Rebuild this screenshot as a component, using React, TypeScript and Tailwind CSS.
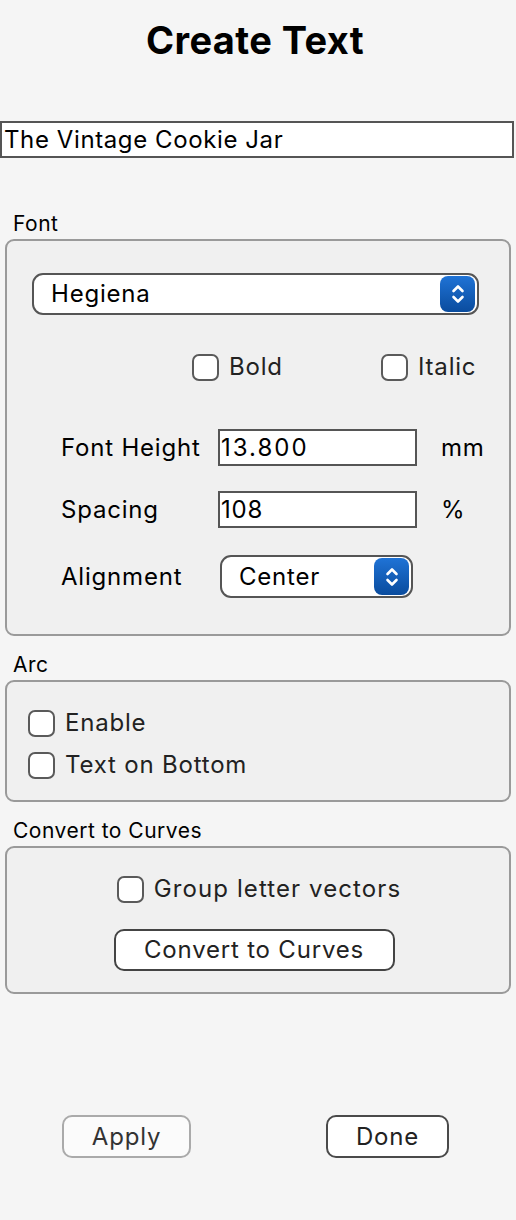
import React from "react";

const Check = ({ label }: { label: string }) => (
  <div className="flex items-center">
    <div className="w-[27px] h-[27px] rounded-[7px] border-2 border-[#5a5a5a] bg-white shrink-0" />
    <span className="ml-[10px] text-[24px] leading-[28px] text-[#222]">{label}</span>
  </div>
);

const Stepper = ({ w = 35, h = 36 }: { w?: number; h?: number }) => (
  <div
    className="rounded-[8px] bg-gradient-to-b from-[#1f73d6] to-[#0a4c9e] flex items-center justify-center"
    style={{ width: w, height: h }}
  >
    <svg width="16" height="24" viewBox="0 0 16 24" fill="none" stroke="white" strokeWidth="2.6" strokeLinecap="round" strokeLinejoin="round">
      <path d="M3.5 9 L8 4.5 L12.5 9" />
      <path d="M3.5 15 L8 19.5 L12.5 15" />
    </svg>
  </div>
);

export default function App() {
  return (
    <div className="w-[516px] h-[1220px] bg-[#f5f5f5] font-['Inter','Liberation_Sans',sans-serif] text-black tracking-[0.8px]">
      <div className="h-[80px] flex items-center justify-center pr-[6px] text-[38px] font-bold tracking-[0.4px]">
        Create Text
      </div>
      <div className="mt-[41px] h-[37px] w-[514px] border-2 border-[#555] bg-white flex items-center px-[2px] text-[24px] tracking-[0.6px]">
        The Vintage Cookie Jar
      </div>

      <div className="mt-[51px] h-[30px] leading-[30px] pl-[13px] text-[21px] tracking-[0.5px]">Font</div>
      <div className="ml-[5px] w-[506px] h-[397px] border-2 border-[#9a9a9a] rounded-[9px] bg-[#f0f0f0]">
        <div className="mt-[32px] ml-[25px] w-[447px] h-[42px] rounded-[11px] border-2 border-[#555] bg-white flex items-center justify-between pl-[17px] pr-[2px] text-[24px]">
          <span>Hegiena</span>
          <Stepper />
        </div>
        <div className="mt-[38px] flex items-center">
          <div className="ml-[185px] w-[189px]">
            <Check label="Bold" />
          </div>
          <Check label="Italic" />
        </div>
        <div className="mt-[48px] flex items-center h-[37px]">
          <div className="ml-[54px] w-[157px] text-[24px]">Font Height</div>
          <div className="w-[199px] h-[37px] border-2 border-[#555] bg-white flex items-center px-[1px] text-[24px] tracking-[2px]">13.800</div>
          <div className="ml-[24px] text-[24px]">mm</div>
        </div>
        <div className="mt-[25px] flex items-center h-[37px]">
          <div className="ml-[54px] w-[157px] text-[24px]">Spacing</div>
          <div className="w-[199px] h-[37px] border-2 border-[#555] bg-white flex items-center px-[1px] text-[24px]">108</div>
          <div className="ml-[24px] text-[24px]">%</div>
        </div>
        <div className="mt-[27px] flex items-center h-[43px]">
          <div className="ml-[54px] w-[159px] text-[24px]">Alignment</div>
          <div className="w-[193px] h-[43px] rounded-[11px] border-2 border-[#555] bg-white flex items-center justify-between pl-[17px] pr-[2px] text-[24px]">
            <span>Center</span>
            <Stepper h={37} />
          </div>
        </div>
      </div>

      <div className="mt-[14px] h-[30px] leading-[30px] pl-[13px] text-[21px] tracking-[0.5px]">Arc</div>
      <div className="ml-[5px] w-[506px] h-[122px] border-2 border-[#9a9a9a] rounded-[9px] bg-[#f0f0f0] pl-[21px] pt-[27px]">
        <Check label="Enable" />
        <div className="mt-[14px]">
          <Check label="Text on Bottom" />
        </div>
      </div>

      <div className="mt-[14px] h-[30px] leading-[30px] pl-[13px] text-[21px] tracking-[0.5px]">Convert to Curves</div>
      <div className="ml-[5px] w-[506px] h-[148px] border-2 border-[#9a9a9a] rounded-[9px] bg-[#f0f0f0] pt-[27px] flex flex-col items-center">
        <div className="pl-[2px] tracking-[1.1px]">
          <Check label="Group letter vectors" />
        </div>
        <div className="mt-[26px] w-[281px] h-[42px] rounded-[10px] border-2 border-[#444] bg-white flex items-center justify-center text-[24px] text-[#222] mr-[8px]">
          Convert to Curves
        </div>
      </div>

      <div className="mt-[121px] flex items-center">
        <div className="ml-[62px] w-[129px] h-[43px] rounded-[10px] border-2 border-[#aaa] bg-[#fbfbfb] flex items-center justify-center text-[24px] text-[#333]">
          Apply
        </div>
        <div className="ml-[135px] w-[123px] h-[43px] rounded-[10px] border-2 border-[#4a4a4a] bg-white flex items-center justify-center text-[24px] text-[#222]">
          Done
        </div>
      </div>
    </div>
  );
}
